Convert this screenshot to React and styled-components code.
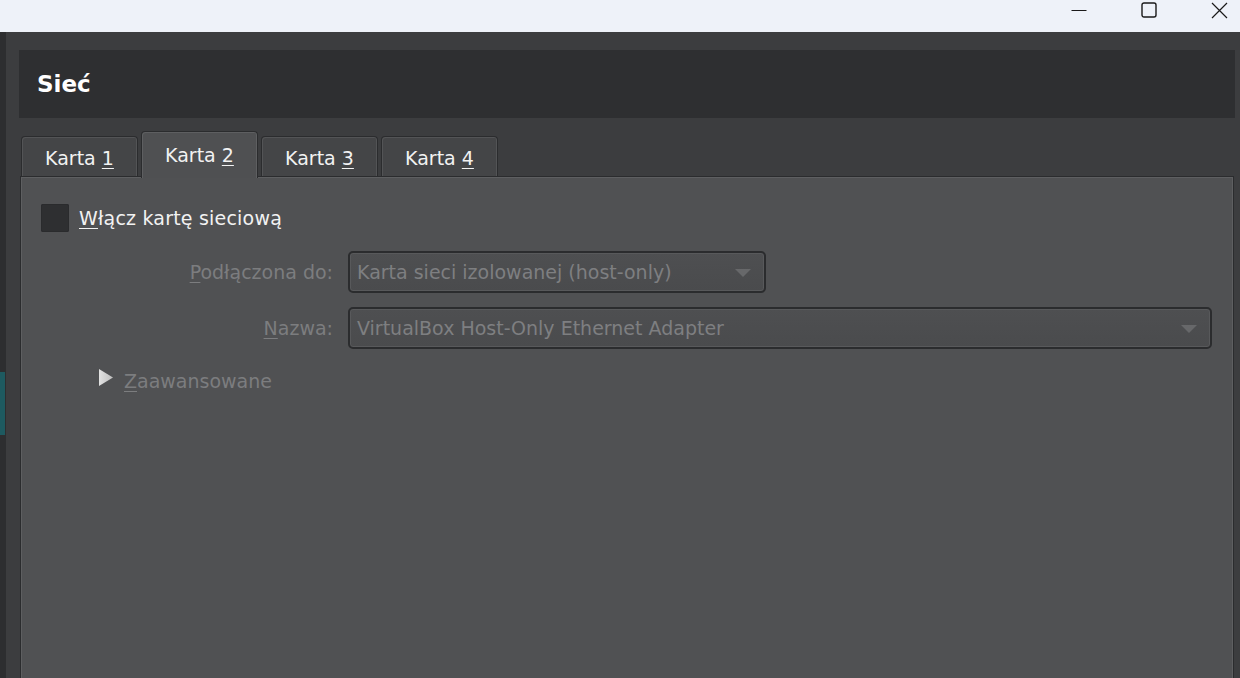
import React from "react";
import styled, { createGlobalStyle } from "styled-components";

const GlobalStyle = createGlobalStyle`
  html, body {
    margin: 0;
    padding: 0;
    background: #3c3d3f;
    overflow: hidden;
  }
  body {
    font-family: "DejaVu Sans", "Liberation Sans", sans-serif;
  }
`;

const Window = styled.div`
  width: 1240px;
  height: 678px;
  display: flex;
  flex-direction: column;
  background: #3c3d3f;
`;

const TitleBar = styled.div`
  height: 32px;
  flex: none;
  background: #eef2f9;
  display: flex;
  justify-content: flex-end;
  align-items: flex-start;
  overflow: hidden;
`;

const Controls = styled.div`
  display: flex;
  margin-right: -14px;
`;

const ControlButton = styled.div`
  width: 70px;
  height: 18px;
  display: flex;
  align-items: center;
  justify-content: center;
  padding-top: 1px;
`;

const Body = styled.div`
  flex: 1;
  display: flex;
  min-height: 0;
`;

const Sidebar = styled.div`
  width: 6px;
  flex: none;
  background: #2d2e30;
  padding-top: 340px;
  box-sizing: border-box;
`;

const SideSelection = styled.div`
  width: 5px;
  height: 63px;
  background: #1e5a60;
`;

const Main = styled.div`
  flex: 1;
  display: flex;
  flex-direction: column;
  margin-left: 13px;
  margin-right: 5px;
  padding-top: 18px;
  min-width: 0;
`;

const Header = styled.div`
  height: 68px;
  flex: none;
  background: #2e2f31;
  display: flex;
  align-items: center;
  padding-left: 18px;
  color: #ffffff;
  font-weight: bold;
  font-size: 23px;
`;

const TabBar = styled.div`
  margin-top: 13px;
  height: 45px;
  flex: none;
  display: flex;
  align-items: flex-end;
  gap: 3px;
  padding-left: 2px;
  position: relative;
  z-index: 1;
`;

const Tab = styled.div`
  width: 117px;
  box-sizing: border-box;
  height: ${(p) => (p.$active ? "47px" : "40px")};
  margin-bottom: ${(p) => (p.$active ? "-2px" : "0")};
  background: ${(p) => (p.$active ? "#4f5052" : "#444547")};
  border: 1px solid #2b2c2e;
  border-bottom: none;
  border-radius: 4px 4px 0 0;
  box-shadow: inset 1px 1px 0 ${(p) => (p.$active ? "#5e5f61" : "#535456")},
    inset -1px 0 0 ${(p) => (p.$active ? "#5e5f61" : "#535456")};
  color: #f2f2f2;
  font-size: 19px;
  display: flex;
  justify-content: center;
  padding-top: ${(p) => (p.$active ? "12px" : "10px")};
`;

const Mnemonic = styled.u`
  text-decoration-thickness: 1px;
  text-underline-offset: 3px;
`;

const Panel = styled.div`
  flex: 1;
  margin: 0 1px 0 1px;
  background: #505153;
  border: 1px solid #2b2c2e;
  border-bottom: none;
  box-shadow: inset 1px 1px 0 #5e5f61, inset -1px 0 0 #5e5f61;
  padding: 27px 21px 0 20px;
  display: flex;
  flex-direction: column;
`;

const CheckRow = styled.label`
  display: flex;
  align-items: center;
  gap: 10px;
  height: 28px;
  color: #f2f2f2;
  font-size: 19px;
  letter-spacing: 0.2px;
`;

const CheckBox = styled.span`
  width: 28px;
  height: 28px;
  border-radius: 2px;
  background: #2e2f31;
  box-shadow: inset 0 0 0 1px #2a2b2d;
`;

const FormGrid = styled.div`
  margin-top: 19px;
  display: grid;
  grid-template-columns: 292px 1fr;
  column-gap: 15px;
  row-gap: 14px;
  align-items: center;
`;

const FieldLabel = styled.div`
  text-align: right;
  color: #7c7d7f;
  font-size: 19px;
`;

const Combo = styled.div`
  width: ${(p) => (p.$width ? p.$width : "auto")};
  height: 42px;
  box-sizing: border-box;
  border: 2px solid #2b2c2e;
  border-radius: 5px;
  background: linear-gradient(#4e4f51, #4a4b4d);
  box-shadow: inset 0 0 0 1px #58595b;
  display: flex;
  align-items: center;
  justify-content: space-between;
  padding: 0 13px 0 7px;
  color: #7e7f81;
  font-size: 19px;
`;

const Arrow = styled.span`
  width: 0;
  height: 0;
  border-left: 8px solid transparent;
  border-right: 8px solid transparent;
  border-top: 8px solid #67686a;
  margin-top: 1px;
`;

const AdvancedRow = styled.div`
  margin-top: 20px;
  padding-left: 57px;
  height: 24px;
  display: flex;
  align-items: center;
  gap: 10px;
  color: #7c7d7f;
  font-size: 19px;
`;

const Disclosure = styled.svg`
  width: 16px;
  height: 17px;
  margin-top: -7px;
`;

const App = () => {
  return (
    <Window>
      <GlobalStyle />
      <TitleBar>
        <Controls>
          <ControlButton>
            <svg width="16" height="16" viewBox="0 0 16 16">
              <line x1="0.5" y1="8.5" x2="15.5" y2="8.5" stroke="#1a1a1a" strokeWidth="1" />
            </svg>
          </ControlButton>
          <ControlButton>
            <svg width="16" height="16" viewBox="0 0 16 16">
              <rect x="1" y="1" width="14" height="14" rx="2" fill="none" stroke="#1a1a1a" strokeWidth="1.4" />
            </svg>
          </ControlButton>
          <ControlButton>
            <svg width="17" height="17" viewBox="0 0 17 17">
              <path d="M1 1 L16 16 M16 1 L1 16" stroke="#1a1a1a" strokeWidth="1.2" />
            </svg>
          </ControlButton>
        </Controls>
      </TitleBar>
      <Body>
        <Sidebar>
          <SideSelection />
        </Sidebar>
        <Main>
          <Header>Sieć</Header>
          <TabBar>
            <Tab>Karta&nbsp;<Mnemonic>1</Mnemonic></Tab>
            <Tab $active>Karta&nbsp;<Mnemonic>2</Mnemonic></Tab>
            <Tab>Karta&nbsp;<Mnemonic>3</Mnemonic></Tab>
            <Tab>Karta&nbsp;<Mnemonic>4</Mnemonic></Tab>
          </TabBar>
          <Panel>
            <CheckRow>
              <CheckBox />
              <span><Mnemonic>W</Mnemonic>łącz kartę sieciową</span>
            </CheckRow>
            <FormGrid>
              <FieldLabel><Mnemonic>P</Mnemonic>odłączona do:</FieldLabel>
              <Combo $width="418px">
                <span>Karta sieci izolowanej (host-only)</span>
                <Arrow />
              </Combo>
              <FieldLabel><Mnemonic>N</Mnemonic>azwa:</FieldLabel>
              <Combo>
                <span>VirtualBox Host-Only Ethernet Adapter</span>
                <Arrow />
              </Combo>
            </FormGrid>
            <AdvancedRow>
              <Disclosure viewBox="0 0 16 17">
                <defs>
                  <linearGradient id="tri" x1="0" y1="0" x2="1" y2="0">
                    <stop offset="0" stopColor="#e2e2e2" />
                    <stop offset="1" stopColor="#bdbdbd" />
                  </linearGradient>
                </defs>
                <polygon points="1,0 15,8.5 1,17" fill="url(#tri)" />
              </Disclosure>
              <span><Mnemonic>Z</Mnemonic>aawansowane</span>
            </AdvancedRow>
          </Panel>
        </Main>
      </Body>
    </Window>
  );
};

export default App;
